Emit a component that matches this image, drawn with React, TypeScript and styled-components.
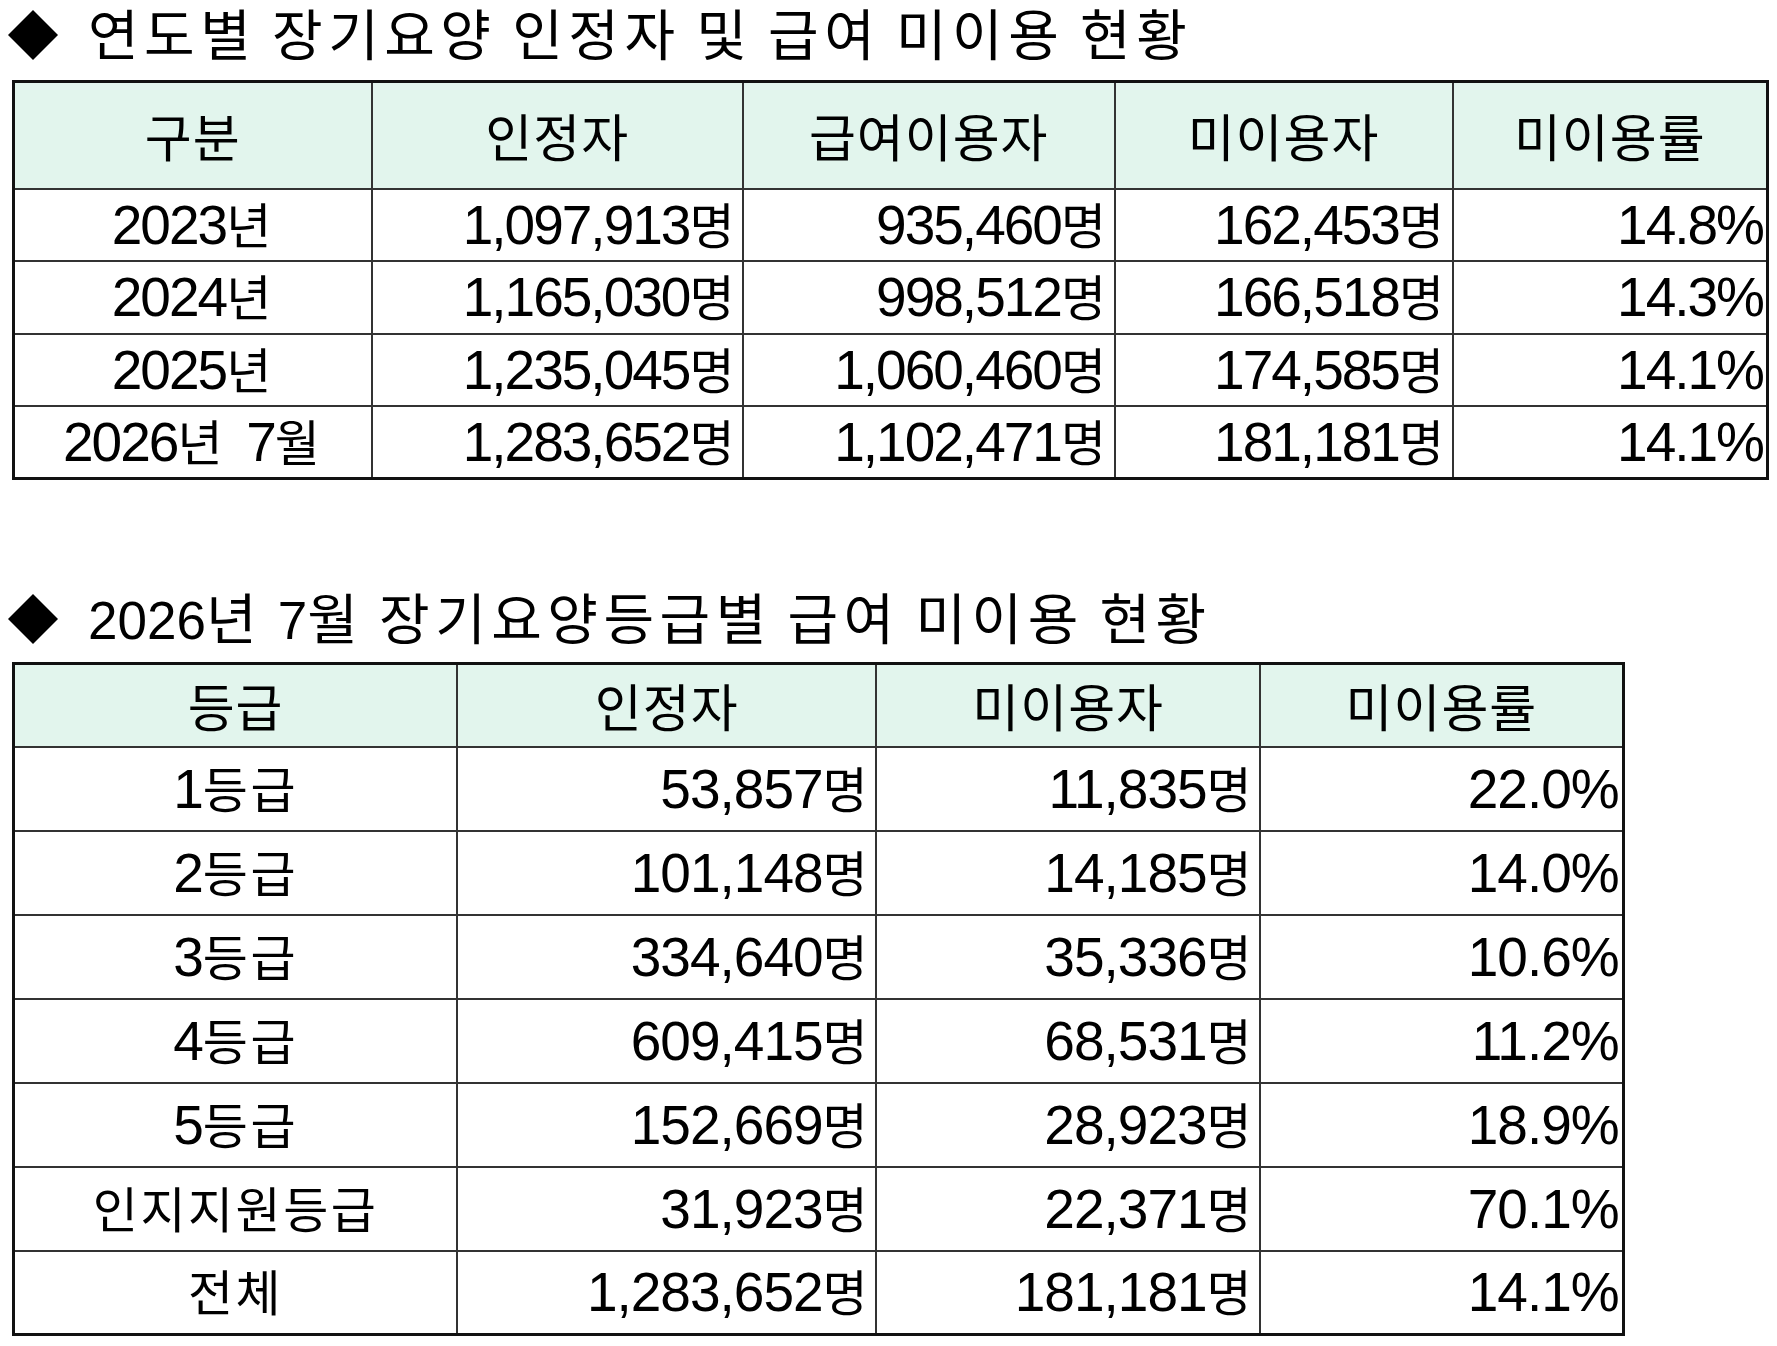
import React from 'react';
import styled, { createGlobalStyle } from 'styled-components';

const GlobalStyle = createGlobalStyle`
  html, body { margin: 0; padding: 0; background: #ffffff; }
  body {
    font-family: "Liberation Sans", "Noto Sans CJK KR", sans-serif;
    color: #000;
  }
`;

const Page = styled.main`
  display: flex;
  flex-direction: column;
  width: 1777px;
`;

const Section = styled.section<{ $top: number; $gap: number }>`
  display: flex;
  flex-direction: column;
  gap: ${(p) => p.$gap}px;
  margin-top: ${(p) => p.$top}px;
`;

const TitleRow = styled.h2`
  display: flex;
  align-items: center;
  gap: 30px;
  height: 70px;
  margin: 0;
  padding-left: 8px;
  font-family: "Liberation Sans Narrow", "Arial Narrow", "Liberation Sans", sans-serif;
  font-weight: normal;
  font-size: 53px;
  line-height: 1.3;
  word-spacing: 1px;
  white-space: pre;
`;

const TitleText = styled.span`
  display: block;
  margin-top: -2px;
`;

const Diamond = styled.span`
  flex: none;
  width: 50px;
  height: 50px;
  background: #000;
  clip-path: polygon(50% 0, 100% 50%, 50% 100%, 0 50%);
`;

const Ko = styled.span<{ $size: number; $ls: number }>`
  font-family: "Noto Sans CJK KR", sans-serif;
  font-size: ${(p) => p.$size}px;
  letter-spacing: ${(p) => p.$ls}px;
`;

const Table = styled.table<{ $width: number }>`
  border-collapse: collapse;
  table-layout: fixed;
  width: ${(p) => p.$width}px;
  margin-left: 12px;
  border: 3px solid #111;
`;

const Row = styled.tr<{ $h: number }>`
  height: ${(p) => p.$h}px;
`;

const HeadCell = styled.th`
  padding: 0;
  background: #e2f5ed;
  border: 2px solid #333;
  font-family: "Noto Sans CJK KR", sans-serif;
  font-weight: normal;
  font-size: 51px;
  letter-spacing: 1px;
  line-height: 1.2;
  text-align: center;
  vertical-align: middle;
  white-space: nowrap;
`;

const Cell = styled.td<{ $align: 'center' | 'right'; $pad: number; $ls: number }>`
  padding: 0 ${(p) => p.$pad}px 0 0;
  border: 2px solid #333;
  font-size: 55px;
  letter-spacing: ${(p) => p.$ls}px;
  word-spacing: 8px;
  line-height: 1.2;
  text-align: ${(p) => p.$align};
  vertical-align: middle;
  white-space: pre;
`;

const HANGUL = /([\uAC00-\uD7A3]+)/;

function Mixed({ text, size, ls }: { text: string; size: number; ls: number }) {
  return (
    <>
      {text
        .split(HANGUL)
        .filter((s) => s.length > 0)
        .map((part, i) =>
          HANGUL.test(part) ? (
            <Ko key={i} $size={size} $ls={ls}>
              {part}
            </Ko>
          ) : (
            <React.Fragment key={i}>{part}</React.Fragment>
          )
        )}
    </>
  );
}

type TableData = {
  cols: number[];
  headH: number;
  rowH: number;
  numLs: number;
  head: string[];
  rows: string[][];
};

const yearly: TableData = {
  cols: [358, 371.5, 371.5, 338, 315],
  headH: 107,
  rowH: 72.5,
  numLs: -2,
  head: ['구분', '인정자', '급여이용자', '미이용자', '미이용률'],
  rows: [
    ['2023년', '1,097,913명', '935,460명', '162,453명', '14.8%'],
    ['2024년', '1,165,030명', '998,512명', '166,518명', '14.3%'],
    ['2025년', '1,235,045명', '1,060,460명', '174,585명', '14.1%'],
    ['2026년 7월', '1,283,652명', '1,102,471명', '181,181명', '14.1%'],
  ],
};

const grades: TableData = {
  cols: [443.7, 419, 384, 363],
  headH: 83,
  rowH: 84,
  numLs: -1,
  head: ['등급', '인정자', '미이용자', '미이용률'],
  rows: [
    ['1등급', '53,857명', '11,835명', '22.0%'],
    ['2등급', '101,148명', '14,185명', '14.0%'],
    ['3등급', '334,640명', '35,336명', '10.6%'],
    ['4등급', '609,415명', '68,531명', '11.2%'],
    ['5등급', '152,669명', '28,923명', '18.9%'],
    ['인지지원등급', '31,923명', '22,371명', '70.1%'],
    ['전체', '1,283,652명', '181,181명', '14.1%'],
  ],
};

function DataTable({ data }: { data: TableData }) {
  const width = data.cols.reduce((a, b) => a + b, 0) + 3;
  return (
    <Table $width={width}>
      <colgroup>
        {data.cols.map((w, i) => (
          <col key={i} style={{ width: `${w}px` }} />
        ))}
      </colgroup>
      <thead>
        <Row $h={data.headH}>
          {data.head.map((h) => (
            <HeadCell key={h}>{h}</HeadCell>
          ))}
        </Row>
      </thead>
      <tbody>
        {data.rows.map((r) => (
          <Row key={r[0]} $h={data.rowH}>
            {r.map((c, i) => (
              <Cell
                key={i}
                $align={i === 0 ? 'center' : 'right'}
                $pad={i === 0 ? 0 : c.endsWith('%') ? 3 : 5}
                $ls={data.numLs}
              >
                <Mixed text={c} size={49} ls={2.5} />
              </Cell>
            ))}
          </Row>
        ))}
      </tbody>
    </Table>
  );
}

function Title({ text }: { text: string }) {
  return (
    <TitleRow>
      <Diamond />
      <TitleText>
        <Mixed text={text} size={55} ls={5.5} />
      </TitleText>
    </TitleRow>
  );
}

export default function App() {
  return (
    <>
      <GlobalStyle />
      <Page>
        <Section $top={0} $gap={10}>
          <Title text="연도별 장기요양 인정자 및 급여 미이용 현황" />
          <DataTable data={yearly} />
        </Section>
        <Section $top={104} $gap={8}>
          <Title text="2026년 7월 장기요양등급별 급여 미이용 현황" />
          <DataTable data={grades} />
        </Section>
      </Page>
    </>
  );
}
